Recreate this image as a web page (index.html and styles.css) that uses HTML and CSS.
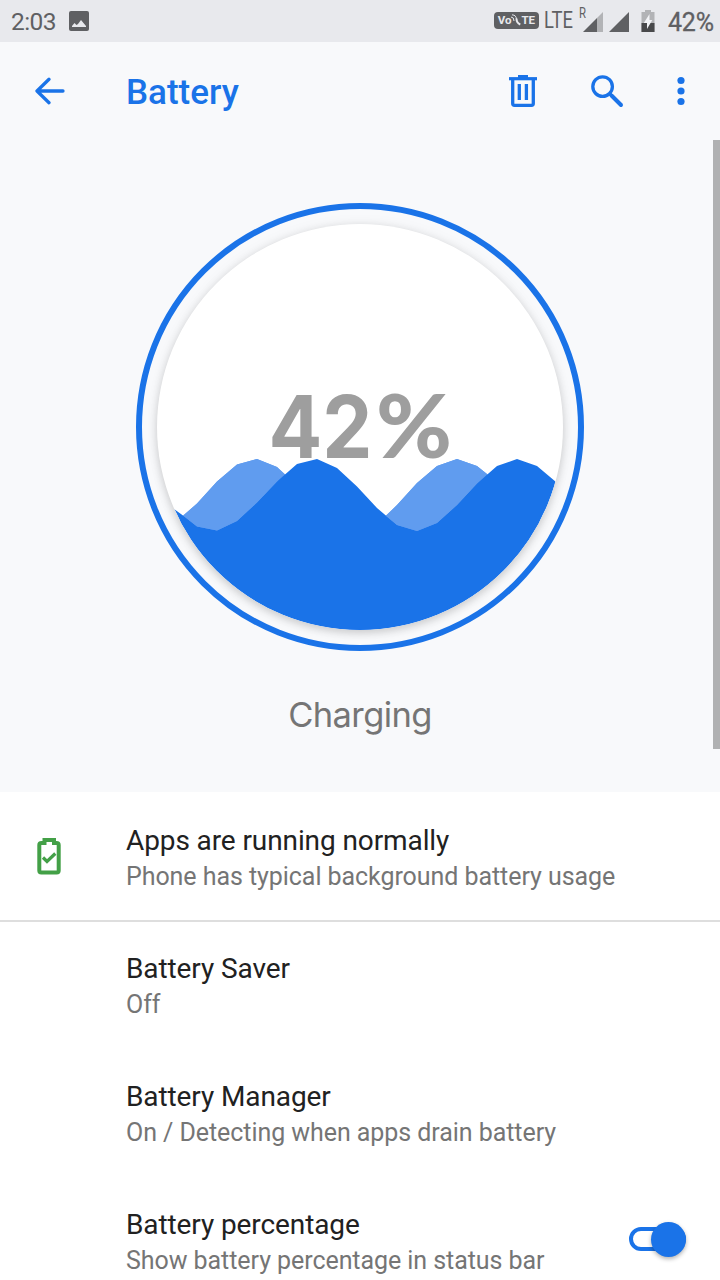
FILE: index.html
```html
<!DOCTYPE html>
<html lang="en">
<head>
<meta charset="utf-8">
<title>Battery</title>
<link rel="stylesheet" href="styles.css">
</head>
<body>
<div class="screen">
  <header class="status">
    <span class="clock">2:03</span>
    <svg class="photo" width="20" height="20" viewBox="0 0 20 20"><rect width="20" height="20" rx="2" fill="#5f6063"/><path d="M3 16v-1l2.500-3 2 2 1.500-1 3-4 5 6v1z" fill="#e8e9ed"/></svg>
    <div class="status-right">
      <span class="volte"><span>Vo</span><svg width="10" height="13" viewBox="0 0 10 13" fill="none" stroke="#e8e9ed"><path d="M0 3q3 0 3 4M1 .8q4.500.2 4.500 5"/><path d="M5.500 4.500q0 4.500 3.800 6" stroke-width="2"/></svg><span>TE</span></span>
      <span class="lte">LTE</span>
      <svg class="signals" width="54" height="28" viewBox="0 0 54 28"><text class="roam" x="1" y="13" textLength="7" lengthAdjust="spacingAndGlyphs">R</text><path d="M19 13l6-6v20h-6z" fill="#b2b3b6"/><path d="M5 27L19 13v14z" fill="#5f6063"/><path d="M31 27L51 7v20z" fill="#5f6063"/></svg>
      <svg class="bat" width="14" height="24" viewBox="0 0 14 24"><path d="M4 1h6v2h3.500v20H.5V3H4z" fill="#b2b3b6"/><path d="M.5 14h13v9H.5z" fill="#48494b"/><path d="M8.500 5L2.800 14H6v6l5.300-9H8.500z" fill="#f2f3f6"/></svg>
      <span class="pct">42%</span>
    </div>
  </header>
  <nav class="toolbar">
    <svg class="back" width="32" height="28" viewBox="0 0 32 28" fill="none" stroke="#1a73e8" stroke-width="3.300" stroke-linecap="round" stroke-linejoin="round"><path d="M29 14H3.500M15 2.300L3 14l12 11.700"/></svg>
    <h1>Battery</h1>
    <svg class="trash" width="28" height="32" viewBox="0 0 28 32" fill="none" stroke="#1a73e8"><path d="M0 3.700h28" stroke-width="3.200"/><path d="M9 1.700h10" stroke-width="3.400"/><path d="M3.700 4v24.500q0 1.800 1.800 1.800h17q1.800 0 1.800-1.800V4" stroke-width="3.300"/><path d="M10.300 9v16M17.400 9v16" stroke-width="3.300"/></svg>
    <svg class="search" width="34" height="34" viewBox="0 0 34 34" fill="none" stroke="#1a73e8" stroke-width="3.300"><circle cx="12.600" cy="12.600" r="9.800"/><path d="M20 20l1 1"/><path d="M21.500 21.500l9.500 9.500" stroke-width="4" stroke-linecap="round"/></svg>
    <svg class="more" width="8" height="30" viewBox="0 0 8 30" fill="#1a73e8"><circle cx="4" cy="4.500" r="3.600"/><circle cx="4" cy="15" r="3.600"/><circle cx="4" cy="25.500" r="3.600"/></svg>
  </nav>
  <section class="hero">
    <div class="ring"><div class="dial">
      <svg width="406" height="406" viewBox="157 224 406 406">
        <defs><clipPath id="dial"><circle cx="360" cy="427" r="203"/></clipPath></defs>
        <text class="level" y="458"><tspan x="268.500" textLength="104" lengthAdjust="spacingAndGlyphs">42</tspan><tspan class="sign" x="376" textLength="76" lengthAdjust="spacingAndGlyphs">%</tspan></text>
        <g clip-path="url(#dial)">
          <path d="M157 542L183 516 197 503.500 217 481.500 237 464.500 257 459 277 467 297 485 337 525 357 531 377 524 397 505 417 483 437 466 457 459 477 466 497 482 563 540V630H157z" fill="#609cef"/>
          <path d="M157 494L174 509 183 515.500 197 526.500 217 530.500 237 521 257 502.500 277 481.500 297 464 317 459 337 468 357 486.500 377 508 397 525 417 531 437 523 457 505 477 483.500 497 466 517 459 537 466 556 482 577 504V640H157z" fill="#1a73e8"/>
          <path d="M183 515.500L197 503.500 217 481.500 237 464.500 257 459 277 467 284 474 277 481.500 257 502.500 237 521 217 530.500 197 526.500zM386 516L397 505 417 483 437 466 457 459 477 466 487 474 477 483.500 457 505 437 523 417 531 397 525z" fill="#609cef"/>
        </g>
      </svg>
    </div></div>
    <p class="state">Charging</p>
    <i class="scrollbar"></i>
  </section>
  <main>
    <article class="row tip">
      <svg class="ok" width="24" height="38" viewBox="0 0 24 38" fill="none" stroke="#43a047" stroke-width="4"><path d="M7.500 6H4.500Q2.300 6 2.300 8v25.500q0 2 2 2h15.400q2 0 2-2V8q0-2-2.200-2H17V3H7.500z"/><path d="M6 20.500l4 4 8.300-8" stroke-width="3.200"/></svg>
      <div><h2>Apps are running normally</h2><p>Phone has typical background battery usage</p></div>
    </article>
    <article class="row"><div><h2>Battery Saver</h2><p>Off</p></div></article>
    <article class="row"><div><h2>Battery Manager</h2><p>On / Detecting when apps drain battery</p></div></article>
    <article class="row"><div><h2>Battery percentage</h2><p>Show battery percentage in status bar</p></div>
      <span class="switch"><i></i></span></article>
  </main>
</div>
</body>
</html>
```
FILE: styles.css
```css
* { box-sizing: border-box; margin: 0; padding: 0; }
body { width: 720px; height: 1280px; overflow: hidden; background: #fff; font-family: Roboto, sans-serif; }
svg { display: block; flex: none; }
.screen { width: 720px; height: 1280px; overflow: hidden; }
.status { height: 42px; background: #e8e9ed; display: flex; align-items: center; padding: 0 7px 0 11px; color: #5f6063; white-space: nowrap; }
.clock { font-size: 24.5px; line-height: 44px; letter-spacing: -0.6px; width: 58px; padding-top: 1px; }
.status-right { margin-left: auto; display: flex; align-items: center; height: 42px; }
.volte { width: 45px; height: 17px; border-radius: 4px; background: #5f6063; color: #e8e9ed; display: flex; align-items: center; justify-content: center; font: bold 11.5px/17px Roboto, sans-serif; margin-top: -1px; }
.lte { font-size: 23px; width: 30px; margin-left: 5px; transform: scaleX(.8); transform-origin: 0 50%; line-height: 42px; }
.signals { margin: -4px 0 0 4px; }
.roam { font: 14px Roboto, sans-serif; fill: #5f6063; }
.bat { margin: -1px 0 0 9px; }
.pct { font-size: 25px; line-height: 42px; font-weight: 400; letter-spacing: -.1px; margin: 3px -1px 0 13px; -webkit-text-stroke: .3px #5f6063; }
.toolbar { height: 98px; background: #f8f9fb; display: flex; align-items: center; padding: 0 35px 0 34px; }
h1 { color: #1a73e8; font-size: 35px; line-height: 42px; font-weight: 500; margin: 3px auto 0 60px; }
.search { margin: 0 0 0 53px; }
.more { margin-left: 53px; }
.hero { height: 652px; background: #f8f9fb; position: relative; display: flex; flex-direction: column; align-items: center; padding-top: 63px; }
.ring { width: 448px; height: 448px; border: 6px solid #1a73e8; border-radius: 50%; padding: 15px; flex: none; overflow: hidden; }
.dial { width: 406px; height: 406px; border-radius: 50%; background: #fff; box-shadow: 0 3px 9px rgba(0,0,0,.17), 0 0 14px rgba(0,0,0,.05); overflow: hidden; }
.level { font: 700 86px Inter, sans-serif; fill: #9e9e9e; }
.level .sign { font: 900 87px Lato, sans-serif; }
.state { font: 400 34.5px/44px Inter, sans-serif; color: #757575; margin-top: 42px; letter-spacing: -.6px; }
.scrollbar { position: absolute; right: 0; top: 0; width: 7px; height: 609px; background: #b0b1b2; }
.row { height: 128px; display: flex; align-items: flex-start; padding: 29px 34px 0 126px; white-space: nowrap; }
.tip { height: 130px; border-bottom: 2px solid #dedede; padding: 31px 0 0 37px; }
.ok { margin: 14px 65px 0 0; }
h2 { font-size: 28px; line-height: 36px; font-weight: 400; color: #212121; letter-spacing: -.1px; }
.row p { font-size: 25px; line-height: 36px; color: #757575; letter-spacing: -.06px; }
.switch { margin: 20px 0 0 auto; width: 57px; height: 24px; position: relative; border: 4px solid #1a73e8; border-radius: 12px; }
.switch i { position: absolute; right: -4px; top: -9px; width: 35px; height: 35px; border-radius: 50%; background: #1a73e8; box-shadow: 0 2px 4px rgba(0,0,0,.3); }
```
